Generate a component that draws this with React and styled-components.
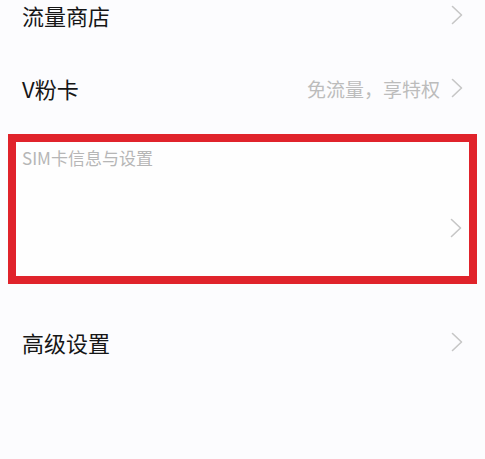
import React from 'react'
import styled, { createGlobalStyle } from 'styled-components'

const GlobalStyle = createGlobalStyle`
    html, body {
        margin: 0;
        padding: 0;
        background: #fcfcfe;
    }
    body {
        font-family: "Noto Sans CJK SC", "Noto Sans", sans-serif;
    }
`

const Chevron = () => (
    <S.Chevron viewBox="0 0 12 20">
        <polyline points="1.5,1.5 10.5,10 1.5,18.5" />
    </S.Chevron>
)

const rows = [
    { title: '流量商店', height: 30, top: 0 },
    { title: 'V粉卡', hint: '免流量，享特权', height: 60, top: 28 },
]

const App = () => {
    return (
        <>
            <GlobalStyle />
            <S.Page>
                {rows.map((row) => (
                    <S.Row key={row.title} $height={row.height} $top={row.top}>
                        <S.Title>{row.title}</S.Title>
                        <S.Right>
                            {row.hint && <S.Hint>{row.hint}</S.Hint>}
                            <Chevron />
                        </S.Right>
                    </S.Row>
                ))}
                <S.Highlight>
                    <S.SimLabel>SIM卡信息与设置</S.SimLabel>
                    <S.SimRow>
                        <Chevron />
                    </S.SimRow>
                </S.Highlight>
                <S.Row $height={60} $top={28}>
                    <S.Title>高级设置</S.Title>
                    <S.Right>
                        <Chevron />
                    </S.Right>
                </S.Row>
            </S.Page>
        </>
    )
}

const S = {
    Page: styled.div`
        display: flex;
        flex-direction: column;
        width: 485px;
        height: 459px;
        overflow: hidden;
        background: #fcfcfe;
    `,
    Row: styled.div`
        display: flex;
        align-items: center;
        justify-content: space-between;
        flex-shrink: 0;
        height: ${({ $height }) => $height}px;
        margin-top: ${({ $top }) => $top || 0}px;
        padding: 0 22px;
    `,
    Title: styled.div`
        font-size: 22px;
        line-height: 1;
        color: #161616;
    `,
    Right: styled.div`
        display: flex;
        align-items: center;
        gap: 11px;
    `,
    Hint: styled.div`
        font-size: 19px;
        line-height: 1;
        color: #bcbcbc;
    `,
    Chevron: styled.svg`
        width: 12px;
        height: 20px;
        fill: none;
        stroke: #c6c6c6;
        stroke-width: 1.6;
        stroke-linecap: round;
        stroke-linejoin: round;
    `,
    Highlight: styled.div`
        display: flex;
        flex-direction: column;
        flex-shrink: 0;
        margin: 16px 8px 0 8px;
        height: 150px;
        box-sizing: border-box;
        border: 8px solid #e0232b;
        background: #fefefe;
        padding: 6px 7px 0 6px;
    `,
    SimLabel: styled.div`
        font-size: 17px;
        line-height: 20px;
        color: #b6b6b6;
    `,
    SimRow: styled.div`
        display: flex;
        justify-content: flex-end;
        margin-top: 50px;
    `,
}

export default App
